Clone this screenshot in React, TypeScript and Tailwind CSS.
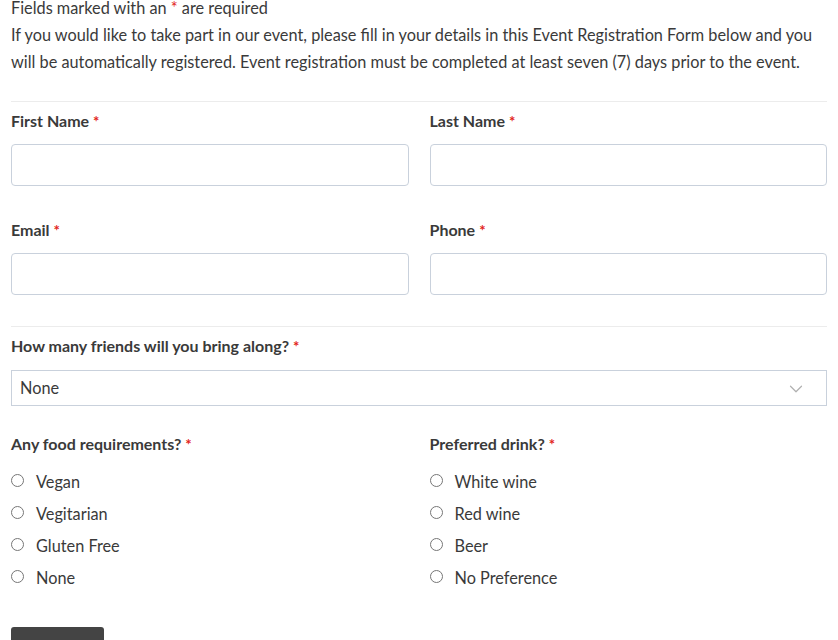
import { ChevronDown } from 'lucide-react'

const Req = () => <span className="text-[#e2231a] text-[15px] ml-[4px]">*</span>

function Field({ label }: { label: string }) {
  return (
    <div>
      <label className="block font-bold text-[16px] leading-[24px] text-[#3a3a3a] mb-[11px]">
        {label}
        <Req />
      </label>
      <input className="block w-full h-[42px] border border-[#c9d1dc] rounded-[4px] bg-white" />
    </div>
  )
}

function RadioGroup({ label, options, name }: { label: string; options: string[]; name: string }) {
  return (
    <div>
      <div className="font-bold text-[16px] leading-[24px] text-[#3a3a3a] mb-[10px]">
        {label}
        <Req />
      </div>
      <div className="flex flex-col">
        {options.map((o) => (
          <label key={o} className="flex items-center h-[32px] text-[16.3px] text-[#3a3a3a]">
            <input type="radio" name={name} className="w-[13px] h-[13px] mr-[12px] mt-[-3px] accent-[#555]" />
            {o}
          </label>
        ))}
      </div>
    </div>
  )
}

export default function App() {
  return (
    <div className="bg-white min-h-[640px] px-[11px] text-[#3a3a3a]" style={{ fontFamily: 'Lato, "Open Sans", sans-serif' }}>
      <div className="mt-[-6px] text-[16.3px] leading-[27px]">
        <p>
          Fields marked with an <span className="text-[#e2231a]">*</span> are required
        </p>
        <p>
          If you would like to take part in our event, please fill in your details in this Event Registration Form below and you
          will be automatically registered. Event registration must be completed at least seven (7) days prior to the event.
        </p>
      </div>

      <div className="mt-[26px] border-t border-[#ececec]" />

      <div className="grid grid-cols-2 gap-x-[21px] gap-y-[32px] pt-[7px]">
        <Field label="First Name" />
        <Field label="Last Name" />
        <Field label="Email" />
        <Field label="Phone" />
      </div>

      <div className="mt-[31px] border-t border-[#ececec]" />

      <div className="pt-[7px]">
        <div className="font-bold text-[16px] leading-[24px] mb-[12px]">
          How many friends will you bring along?
          <Req />
        </div>
        <div className="relative h-[36px] border border-[#c9d1dc] flex items-center px-[8px] text-[16.3px]">
          <span>None</span>
          <ChevronDown className="absolute right-[19px] top-[7px] w-[22px] h-[22px] text-[#b0b0b0]" strokeWidth={1.3} />
        </div>
      </div>

      <div className="grid grid-cols-2 gap-x-[21px] mt-[26px]">
        <RadioGroup name="food" label="Any food requirements?" options={['Vegan', 'Vegitarian', 'Gluten Free', 'None']} />
        <RadioGroup name="drink" label="Preferred drink?" options={['White wine', 'Red wine', 'Beer', 'No Preference']} />
      </div>

      <div className="mt-[33px]">
        <button className="w-[93px] h-[40px] bg-[#444] rounded-[3px] text-white" />
      </div>
    </div>
  )
}
